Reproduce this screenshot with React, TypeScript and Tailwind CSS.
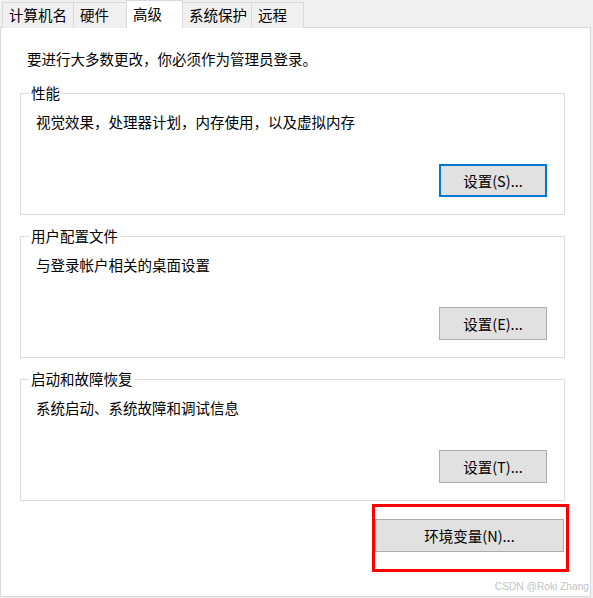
import React from "react";

const FONT = "font-['Microsoft_YaHei_UI','Noto_Sans_CJK_SC',sans-serif]";

const TABS = [
  { label: "计算机名", w: "w-[72px]" },
  { label: "硬件", w: "w-[54px]" },
  { label: "高级", w: "w-[57px]", active: true },
  { label: "系统保护", w: "w-[70px]" },
  { label: "远程", w: "w-[53px]" },
];

const GROUPS = [
  { title: "性能", desc: "视觉效果，处理器计划，内存使用，以及虚拟内存", btn: "设置(S)...", focus: true },
  { title: "用户配置文件", desc: "与登录帐户相关的桌面设置", btn: "设置(E)..." },
  { title: "启动和故障恢复", desc: "系统启动、系统故障和调试信息", btn: "设置(T)..." },
];

function Group({ title, desc, btn, focus }: { title: string; desc: string; btn: string; focus?: boolean }) {
  return (
    <div className="relative h-[122px] w-[545px] border border-[#dcdcdc] pl-[15px] pt-[18px]">
      <span className="absolute left-[8px] top-[-11px] bg-white px-[2px] leading-[20px]">{title}</span>
      <div className="leading-[20px]">{desc}</div>
      <div className="mt-[32px] flex justify-end pr-[17px]">
        <button
          className={[
            "flex h-[33px] w-[108px] items-center justify-center bg-[#e1e1e1] leading-[20px]",
            focus ? "border-2 border-[#0078d7]" : "border border-[#adadad]",
          ].join(" ")}
        >
          {btn}
        </button>
      </div>
    </div>
  );
}

export default function App() {
  return (
    <div className={`relative h-[598px] w-[593px] overflow-hidden bg-[#f0f0f0] text-[14.5px] text-black ${FONT}`}>
      {/* Tab strip */}
      <div className="relative z-10 -mb-px flex h-[28px] items-end pl-[2px]">
        {TABS.map((t, i) =>
          t.active ? (
            <div
              key={t.label}
              className={`${t.w} -ml-px flex h-[28px] items-start border border-b-0 border-[#d9d9d9] bg-white pl-[6px] pt-[3px] leading-[20px]`}
            >
              {t.label}
            </div>
          ) : (
            <div
              key={t.label}
              className={[
                t.w,
                "flex h-[26px] items-start border border-b-0 border-[#d9d9d9] bg-[#f0f0f0] pl-[6px] pt-[2px] leading-[20px]",
                i === 0 ? "" : "-ml-px",
              ].join(" ")}
            >
              {t.label}
            </div>
          )
        )}
      </div>

      {/* Page */}
      <div className="h-[570px] w-[591px] border border-[#d9d9d9] bg-white">
        <div className="pl-[26px] pt-[21px] leading-[20px]">要进行大多数更改，你必须作为管理员登录。</div>
        <div className="mt-[24px] flex flex-col gap-[21px] pl-[19px]">
          {GROUPS.map((g) => (
            <Group key={g.title} {...g} />
          ))}
        </div>
        <div className="mt-[3px] flex justify-end pr-[21px]">
          <div className="h-[68px] w-[197px] border-[3px] border-[#ff0000] pr-[2px] pt-[12px]">
            <button className="flex h-[33px] w-[189px] items-center justify-center border border-[#adadad] bg-[#e1e1e1] leading-[20px]">
              环境变量(N)...
            </button>
          </div>
        </div>
      </div>

      {/* Watermark */}
      <span className="absolute bottom-[5px] right-[4px] font-['Liberation_Sans',sans-serif] text-[10.2px] leading-[13px] text-[#c4c4c4]">
        CSDN @Roki Zhang
      </span>
    </div>
  );
}
